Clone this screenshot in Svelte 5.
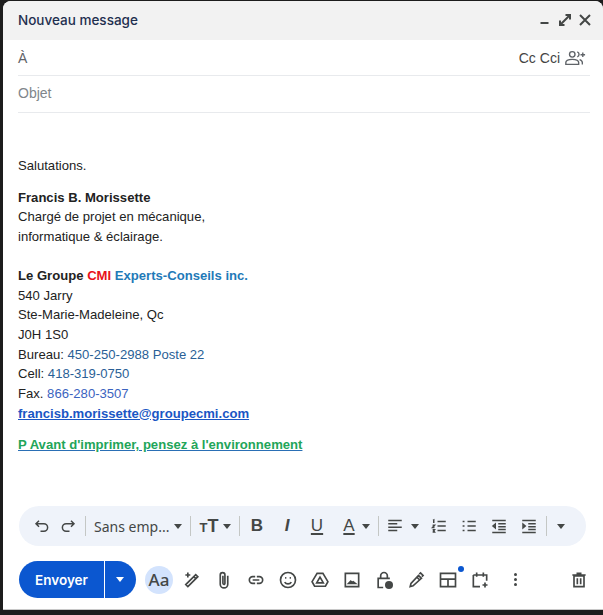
<script lang="ts">
	const icons: Record<string, string> = {
		undo: 'M8 5 4 9l4 4M4 9h10.500a5 5 0 0 1 0 10H10',
		redo: 'M16 5l4 4-4 4M20 9H9.500a5 5 0 0 0 0 10H14',
		ol: 'M10 6h11M10 12h11M10 18h11M4 4.500l1-.5v4M3.500 11h2.500l-2.500 3h2.500M3.500 17h2.500l-1 1.500 1 1.500h-2.500',
		ul: 'M3.500 6h2.500M3.500 12h2.500M3.500 18h2.500M10 6h11M10 12h11M10 18h11',
		outdent: 'M3 4.500h18M11 9h10M11 13h10M11 16.500h10M3 20.500h18M7 9.500v5l-3-2.500z',
		indent: 'M3 4.500h18M11 9h10M11 13h10M11 16.500h10M3 20.500h18M4 9.500v5l3-2.500z',
		wand: 'M7 20l12-12-2.500-2.500L4.500 17.500zM14 8l2.500 2.500M7 3v6M4 6h6',
		clip: 'M16.500 7v10a4.500 4.500 0 0 1-9 0V6a2.800 2.800 0 0 1 5.600 0v10a1.200 1.200 0 0 1-2.400 0V7',
		link: 'M11 8H8a4 4 0 0 0 0 8h3M13 8h3a4 4 0 0 1 0 8h-3M8 12h8',
		smile: 'M12 3a9 9 0 1 0 0 18 9 9 0 0 0 0-18zM8 14.500c1 1.600 2.400 2.200 4 2.200s3-.6 4-2.200M8.500 9.500h1.500M14 9.500h1.500',
		drive: 'M8.500 4h7l6 10-3 5.500H5.500L2.500 14zM12 8.500l-4 7h8z',
		image: 'M4 4h16v16H4zM8 16l2.500-2.500 1.500 1.500 1.500-1 2.500 2z',
		lock: 'M8 10V7a4 4 0 0 1 8 0v3M11 21H5V10h13v1',
		pen: 'M5 20l1-4L15 6.500l3.500 3.500L8.500 19zM13 8.500l3.500 3.500M16 5l1.500-1.500 3 3L19 8',
		layout: 'M3 4h18v16H3zM3 11h18M12 11v9',
		calendar: 'M4 6h16v7M12 20H4V6M8 3v5M16 3v5M18 15v6M15 18h6',
		trash: 'M6 7h12v13H6zM4 6h16M9 4h6M10 10v7M14 10v7'
	};

	const formatIcons = ['ol', 'ul', 'outdent', 'indent'];
	const attachIcons = ['wand', 'clip', 'link', 'smile', 'drive', 'image'];
</script>

{#snippet icon(name: string, cls = '')}
	<svg class="icon {cls}" viewBox="0 0 24 24" aria-hidden="true"><path d={icons[name]} /></svg>
{/snippet}

{#snippet caret(cls = '')}
	<span class="caret {cls}"></span>
{/snippet}

<div class="compose">
	<header class="head">
		<span class="title">Nouveau message</span>
		<div class="win-actions">
			<svg viewBox="0 0 16 16" aria-hidden="true"><path d="M3.500 11h8" /></svg>
			<svg viewBox="0 0 16 16" aria-hidden="true"><path d="M3 13l10-10M8.500 3H13v4.500M3 8.500V13h4.500" /></svg>
			<svg viewBox="0 0 16 16" aria-hidden="true"><path d="M3 3l10 10M13 3L3 13" /></svg>
		</div>
	</header>

	<div class="field to">
		<span>À</span>
		<div class="recipients">
			<span>Cc</span>
			<span>Cci</span>
			<svg class="people" viewBox="0 0 24 24" aria-hidden="true">
				<path d="M9 5a3 3 0 1 0 0 6 3 3 0 0 0 0-6zM2 19v-2c0-2 3-3.500 7-3.500s7 1.500 7 3.500v2zM14.500 5.200a3 3 0 0 1 0 5.600M17 13.700c2 .6 3 1.800 3 3.300v2M20.500 6v5M18 8.500h5" />
			</svg>
		</div>
	</div>
	<div class="field subject">Objet</div>

	<div class="body">
		<p class="hello">Salutations.</p>
		<p class="who">
			<b>Francis B. Morissette</b><br />
			Chargé de projet en mécanique,<br />
			informatique &amp; éclairage.
		</p>
		<p class="card">
			<b>Le Groupe <span class="red">CMI</span> <span class="teal">Experts-Conseils inc.</span></b><br />
			540 Jarry<br />
			Ste-Marie-Madeleine, Qc<br />
			J0H 1S0<br />
			Bureau: <span class="tel">450-250-2988 Poste 22</span><br />
			Cell: <span class="tel">418-319-0750</span><br />
			Fax. <span class="fax">866-280-3507</span><br />
			<a class="mail" href="#mail"><b>francisb.morissette@groupecmi.com</b></a>
		</p>
		<p class="env"><a href="#env"><b>P Avant d'imprimer, pensez à l'environnement</b></a></p>
	</div>

	<div class="format-bar">
		<span class="tool w26">{@render icon('undo')}</span>
		<span class="tool w26">{@render icon('redo')}</span>
		<i class="sep first"></i>
		<span class="font-name">Sans emp...</span>
		{@render caret()}
		<i class="sep"></i>
		<span class="size"><small>T</small>T</span>
		{@render caret()}
		<i class="sep tight"></i>
		<span class="tool w30 glyph"><b>B</b></span>
		<span class="tool w30 glyph"><b><em>I</em></b></span>
		<span class="tool w30 glyph under">U</span>
		<span class="tool w30 glyph under color">A</span>
		{@render caret()}
		<i class="sep tight"></i>
		<span class="tool align">
			<svg class="icon" viewBox="0 0 24 24" aria-hidden="true"><path d="M3 4.500h18M3 9h12M3 13.500h18M3 18h12" /></svg>
		</span>
		{@render caret()}
		<span class="lists">
			{#each formatIcons as name}
				<span class="tool w30">{@render icon(name)}</span>
			{/each}
		</span>
		<i class="sep last"></i>
		{@render caret()}
	</div>

	<div class="actions">
		<div class="send">
			<span class="send-label">Envoyer</span>
			<span class="send-more">{@render caret('white')}</span>
		</div>
		<span class="aa">Aa</span>
		<div class="attach">
			{#each attachIcons as name}
				<span class="tool w32">{@render icon(name, 'large')}</span>
			{/each}
			<span class="tool w32">
				{@render icon('lock', 'large')}
				<i class="clock"></i>
			</span>
			<span class="tool w32">{@render icon('pen', 'large')}</span>
			<span class="tool w32">{@render icon('layout', 'large')}<i class="dot"></i></span>
			<span class="tool w32">{@render icon('calendar', 'large')}</span>
			<span class="more"><i></i><i></i><i></i></span>
		</div>
		<span class="tool trash">{@render icon('trash', 'large')}</span>
	</div>
</div>

<style>
	:global(body) {
		margin: 0;
		background: #1d1d1d;
	}
	.compose {
		box-sizing: border-box;
		display: flex;
		flex-direction: column;
		width: 600px;
		height: 609px;
		margin: 1px 0 0 3px;
		background: #fff;
		border-radius: 8px 8px 0 0;
		border-bottom: 1px solid #c8c8c8;
		overflow: hidden;
		font-family: 'Liberation Sans', Arial, sans-serif;
		color: #222;
	}
	.head {
		display: flex;
		align-items: center;
		justify-content: space-between;
		flex: none;
		box-sizing: border-box;
		height: 39px;
		padding: 0 10px 2px 15px;
		background: #f2f2f2;
	}
	.title {
		font-family: Inter, 'Noto Sans', sans-serif;
		font-size: 13.500px;
		font-weight: 500;
		color: #1f2f4f;
	}
	.win-actions {
		display: flex;
		gap: 4px;
	}
	.win-actions svg {
		width: 16px;
		height: 16px;
		fill: none;
		stroke: #444746;
		stroke-width: 2;
	}
	.field {
		display: flex;
		align-items: center;
		justify-content: space-between;
		flex: none;
		box-sizing: border-box;
		margin: 0 13px 0 15px;
		border-bottom: 1px solid #e8eaed;
		font-size: 14px;
	}
	.to {
		height: 36px;
		color: #5f6368;
	}
	.subject {
		height: 37px;
		padding-bottom: 2px;
		color: #80868b;
	}
	.recipients {
		display: flex;
		align-items: center;
		gap: 4px;
		padding-right: 4px;
		color: #444;
	}
	.people {
		width: 22px;
		height: 22px;
		fill: none;
		stroke: #5f6368;
		stroke-width: 1.5;
	}
	.body {
		flex: 1;
		padding: 43px 15px 0;
		font-size: 13.100px;
		line-height: 19.650px;
		color: #222;
	}
	.body p {
		margin: 0;
	}
	.hello {
		margin-bottom: 12px !important;
	}
	.who {
		margin-bottom: 19.500px !important;
	}
	.card {
		margin-bottom: 12px !important;
	}
	.red {
		color: #e8111a;
	}
	.teal {
		color: #1f7ab8;
	}
	.tel {
		color: #2a5f96;
	}
	.fax {
		color: #3b63c0;
	}
	.mail {
		color: #1a56c4;
		text-decoration: underline;
	}
	.env a {
		color: #22a559;
		text-decoration: underline;
		text-decoration-color: #2a6fb5;
	}
	.format-bar {
		display: flex;
		align-items: center;
		flex: none;
		box-sizing: border-box;
		width: 567px;
		height: 40px;
		margin: 0 0 15px 16px;
		padding-left: 10px;
		background: #eff3fa;
		border-radius: 20px;
		color: #444746;
	}
	.tool {
		display: flex;
		align-items: center;
		justify-content: center;
		flex: none;
		position: relative;
	}
	.w26 {
		width: 26px;
	}
	.w30 {
		width: 30px;
	}
	.w32 {
		width: 32px;
	}
	.icon {
		width: 18px;
		height: 18px;
		fill: none;
		stroke: #444746;
		stroke-width: 2;
	}
	.icon.large {
		width: 20px;
		height: 20px;
	}
	.sep {
		flex: none;
		width: 1px;
		height: 20px;
		margin: 0 8px;
		background: #c4c7c5;
	}
	.sep.first {
		margin-left: 4px;
	}
	.sep.tight {
		margin-right: 2px;
	}
	.sep.last {
		margin: 0 9.500px 0 2px;
	}
	.font-name {
		flex: none;
		width: 80px;
		font-family: 'Noto Sans', 'Open Sans', sans-serif;
		font-size: 14px;
		white-space: nowrap;
	}
	.caret {
		flex: none;
		width: 0;
		height: 0;
		border-left: 4.500px solid transparent;
		border-right: 4.500px solid transparent;
		border-top: 5px solid #444746;
	}
	.caret.white {
		border-top-color: #fff;
	}
	.size {
		flex: none;
		width: 20px;
		margin-right: 4px;
		font-size: 18px;
		font-weight: 700;
		text-align: center;
		white-space: nowrap;
	}
	.size small {
		font-size: 13px;
	}
	.glyph {
		font-size: 17px;
	}
	.under {
		font-weight: 400;
		text-decoration: underline;
		text-decoration-thickness: 2px;
		text-underline-offset: 2px;
	}
	.color {
		margin: 0 -2px 0 2px;
	}
	.align {
		width: 24px;
		margin: 0 4px 0 2px;
	}
	.lists {
		display: flex;
		margin-left: 5px;
	}
	.actions {
		display: flex;
		align-items: center;
		flex: none;
		height: 37px;
		margin: 0 0 11px 16px;
	}
	.send {
		display: flex;
		flex: none;
		width: 117px;
		height: 37px;
		border-radius: 19px;
		overflow: hidden;
		background: #0b57d0;
		color: #fff;
	}
	.send-label {
		display: flex;
		align-items: center;
		justify-content: center;
		width: 85px;
		font-family: Inter, 'Noto Sans', sans-serif;
		font-size: 13.500px;
		font-weight: 600;
		border-right: 1px solid #fff;
	}
	.send-more {
		display: flex;
		align-items: center;
		justify-content: center;
		flex: 1;
		padding-right: 2px;
	}
	.aa {
		display: flex;
		align-items: center;
		justify-content: center;
		flex: none;
		width: 28px;
		height: 28px;
		margin-left: 9px;
		border-radius: 50%;
		background: #d3e3fd;
		font-family: 'Noto Sans', sans-serif;
		font-size: 17px;
		font-weight: 500;
		color: #444746;
	}
	.attach {
		display: flex;
		align-items: center;
		margin-left: 3px;
	}
	.clock {
		position: absolute;
		right: 7px;
		bottom: 1px;
		width: 8px;
		height: 8px;
		border-radius: 50%;
		background: #444746;
	}
	.dot {
		position: absolute;
		top: -4px;
		right: 0;
		width: 6px;
		height: 6px;
		border-radius: 50%;
		background: #0b57d0;
	}
	.more {
		display: flex;
		flex-direction: column;
		gap: 2px;
		margin-left: 18px;
	}
	.more i {
		width: 3px;
		height: 3px;
		border-radius: 50%;
		background: #444746;
	}
	.trash {
		margin-left: 52px;
	}
</style>
